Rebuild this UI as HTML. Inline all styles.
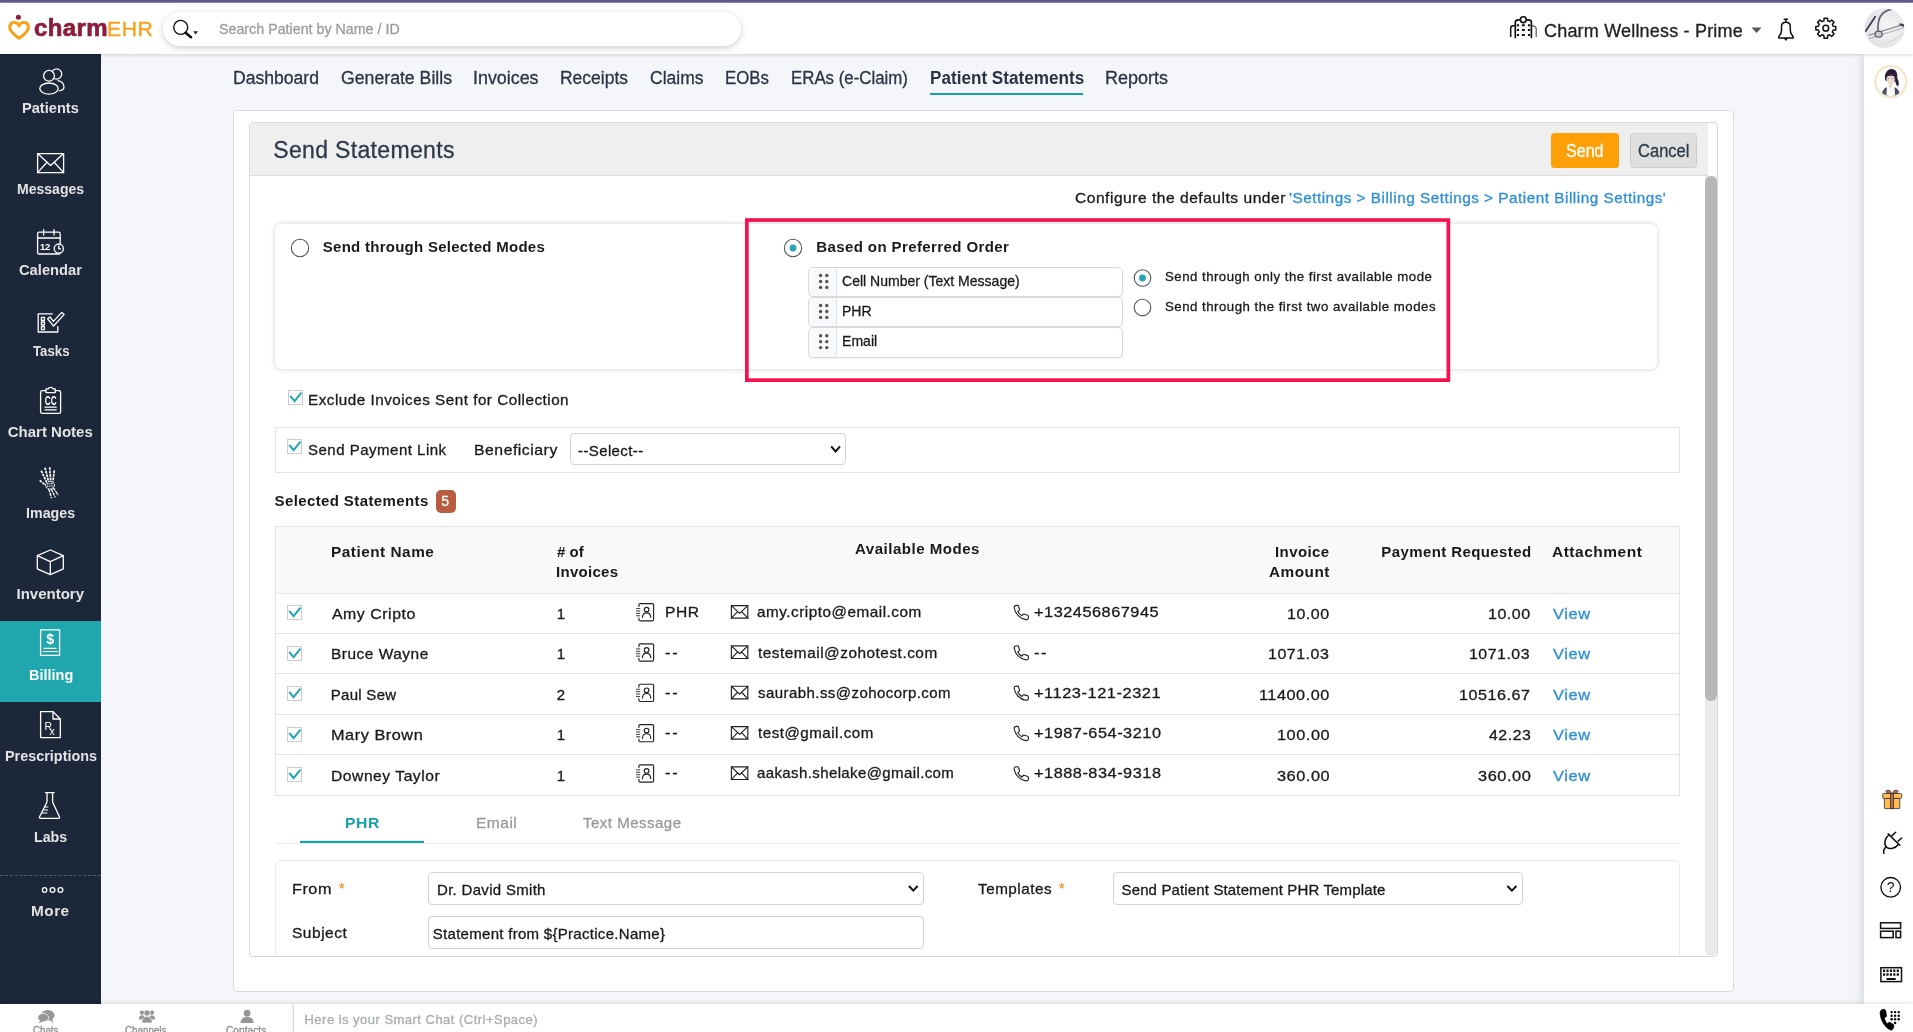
<!DOCTYPE html>
<html lang="en"><head><meta charset="utf-8"><title>Send Statements - charmEHR</title>
<style>
html,body{margin:0;padding:0;}
body{width:1913px;height:1032px;overflow:hidden;background:#f5f6fa;font-family:"Liberation Sans",sans-serif;color:#222;}
#app{will-change:transform;position:relative;width:1913px;height:1032px;overflow:hidden;background:#f5f6fa;}
#app *{box-sizing:border-box;}
.a{position:absolute;}
.t{position:absolute;white-space:nowrap;line-height:1;transform-origin:0 0;-webkit-text-stroke-width:0.3px;}
svg.ic{position:absolute;left:0;top:0;overflow:visible;pointer-events:none;}
svg text{font-family:"Liberation Sans",sans-serif;}
.topline{left:0;top:0;width:1913px;height:3px;background:linear-gradient(#5b5a8c 0,#5b5a8c 2px,#b4b4cc 3px);}
.header{left:0;top:3px;width:1913px;height:51px;background:#fff;box-shadow:0 1px 3px rgba(0,0,0,.16);}
.search{left:163px;top:12px;width:578px;height:34px;border-radius:17px;background:#fff;box-shadow:0 2px 6px rgba(60,64,80,.26);}
.sidebar{left:0;top:54px;width:101px;height:949.5px;background:#1d273a;}
.sb-active{left:0;top:620.5px;width:101px;height:81.5px;background:#1fa7ad;}
.sb-div{left:0;top:875px;width:101px;height:0;border-top:1px dashed #525c78;}
.rightbar{left:1864px;top:54px;width:49px;height:978px;background:#fff;box-shadow:-2px 0 9px rgba(0,0,0,.13);}
.bottombar{left:0;top:1003.5px;width:1913px;height:29px;background:#fff;box-shadow:0 -1px 4px rgba(0,0,0,.12);}
.bb-div{left:293px;top:1003.5px;width:1px;height:29px;background:#d9d9d9;box-shadow:-1px 0 3px rgba(0,0,0,.12);}
.card{left:233px;top:110px;width:1500.5px;height:881.5px;background:#fff;border:1px solid #dcdcdc;border-radius:4px;}
.panel{left:249px;top:122px;width:1468.5px;height:834.5px;background:#fff;border:1px solid #d9d9d9;border-radius:4px;overflow:hidden;}
.phead{left:250px;top:123px;width:1458px;height:52.5px;background:#efefef;border-bottom:1px solid #dcdcdc;}
.btn-send{left:1551px;top:133px;width:68px;height:35px;border-radius:3.5px;background:#fd9f06;}
.btn-cancel{left:1630px;top:133px;width:67px;height:34.5px;border-radius:3.5px;background:#dfdfdf;border:1px solid #cecece;}
.sc-track{left:1705px;top:176px;width:12px;height:780px;background:#ebebec;border-radius:0 0 6px 6px;}
.sc-thumb{left:1705px;top:176px;width:12px;height:525px;border-radius:6px;background:#b7b7b7;}
.opt{left:275px;top:223.5px;width:1382px;height:145.5px;border-radius:6px;background:#fff;box-shadow:0 0 5px rgba(0,0,0,.2);}
.hl{left:745px;top:218px;width:705.5px;height:164px;border:4px solid #f5114f;}
.drag{left:808px;width:314.5px;height:30px;border:1px solid #d6dade;border-radius:5px;background:#fff;overflow:hidden;box-shadow:0 1px 1px rgba(0,0,0,.05);}
.drag i{position:absolute;left:0;top:0;width:27.5px;height:31px;background:#f8f9fa;border-right:1px solid #e1e4e8;}
.cb{width:15px;height:15px;background:#fff;border:1px solid #c9cdd2;}
.paybox{left:275px;top:427px;width:1404.5px;height:46px;border:1px solid #e2e5ea;background:#fff;}
.sel{border:1px solid #d4d4d4;border-radius:4px;background:#fff;}
.badge{left:436px;top:490px;width:20px;height:23px;border-radius:5px;background:#b85c42;}
.tbl{left:275px;top:526px;width:1404.5px;height:269.5px;border:1px solid #e1e4e9;background:#fff;}
.thead{left:276px;top:527px;width:1402.5px;height:66px;background:#f8f9fb;}
.hline{left:276px;width:1402.5px;height:1px;background:#e1e4e9;}
.tab-ul{left:300px;top:841px;width:124px;height:2px;background:#15a0a6;box-shadow:0 -0.5px 0 rgba(21,160,166,.35);}
.tab-line{left:275px;top:843px;width:1404.5px;height:1px;background:#ebebeb;}
.form{left:275px;top:861px;width:1405px;height:130px;border:1px solid #e9e9e9;border-radius:6px;background:#fff;}

</style></head>
<body>
<div id="app">
<div class="a topline"></div>
<div class="a sidebar"></div><div class="a sb-active"></div><div class="a sb-div"></div>
<div class="a" style="left:930px;top:93px;width:153px;height:2px;background:#16a1a7"></div>
<div class="a card"></div>
<div class="a panel"></div>
<div class="a phead"></div>
<div class="a btn-send"></div><div class="a btn-cancel"></div>
<div class="a sc-track"></div><div class="a sc-thumb"></div>
<div class="a opt"></div>
<div class="a drag" style="top:267px;height:30px"><i></i></div>
<div class="a drag" style="top:297px;height:30px"><i></i></div>
<div class="a drag" style="top:327px;height:30.5px"><i></i></div>
<svg class="ic" width="1913" height="1032"><rect x="746.85" y="220.05" width="701.5" height="160.1" fill="none" stroke="#f5114f" stroke-width="3.7"/></svg>
<div class="a cb" style="left:288px;top:390px"></div>
<div class="a paybox"></div>
<div class="a cb" style="left:287px;top:439px"></div>
<div class="a sel" style="left:570px;top:433px;width:275.5px;height:32px"></div>
<div class="a badge"></div>
<div class="a tbl"></div><div class="a thead"></div>
<div class="a hline" style="top:593px"></div>
<div class="a cb" style="left:287px;top:605px"></div>
<div class="a hline" style="top:633px"></div>
<div class="a cb" style="left:287px;top:646px"></div>
<div class="a hline" style="top:673.4px"></div>
<div class="a cb" style="left:287px;top:686px"></div>
<div class="a hline" style="top:714px"></div>
<div class="a cb" style="left:287px;top:727px"></div>
<div class="a hline" style="top:754.3px"></div>
<div class="a cb" style="left:287px;top:767px"></div>
<div class="a tab-line"></div><div class="a tab-ul"></div>
<div class="a" style="left:250px;top:850px;width:1455px;height:106px;overflow:hidden"><div class="a form" style="left:25px;top:10px"></div></div>
<div class="a sel" style="left:428px;top:872px;width:495.5px;height:32.5px"></div>
<div class="a sel" style="left:1113px;top:872px;width:409.5px;height:32.5px"></div>
<div class="a sel" style="left:428px;top:916px;width:495.5px;height:32.5px"></div>
<div class="a rightbar"></div>
<div class="a bottombar"></div><div class="a bb-div"></div>
<div class="a header"></div>
<div class="a search"></div>
<svg class="ic" width="1913" height="1032" viewBox="0 0 1913 1032">
<circle cx="18.4" cy="17.3" r="2.5" fill="#8c1c3b"/>
<path d="M19 26 C17.6 21.3 9.7 21 9.7 27.6 C9.7 32.2 15 35 19 38.4 C23 35 28.4 32.2 28.4 27.6 C28.4 21 20.4 21.3 19 26 Z" fill="none" stroke="#f9a01b" stroke-width="3" stroke-linejoin="round"/>
<circle cx="180.7" cy="27.4" r="7" fill="none" stroke="#111" stroke-width="1.4"/>
<path d="M185.6 32.8 L191 37.2" stroke="#111" stroke-width="2.6" stroke-linecap="round"/>
<path d="M193.2 31.2 L198 31.2 L195.6 34.6 Z" fill="#222"/>
<g fill="none" stroke="#111" stroke-width="1.7" stroke-linecap="round" stroke-linejoin="round"><path d="M1515.3 37.4 V22.6 Q1515.3 19.9 1518 19.9 H1528.7 Q1531.4 19.9 1531.4 22.6 V37.4"/><path d="M1515.3 25.8 H1513.2 Q1510.7 25.8 1510.7 28.3 V36.4" stroke-width="1.5"/><path d="M1531.4 25.8 H1533.4 Q1536.2 26.6 1536.2 28.8 V36.4" stroke-width="1.3" stroke-opacity="0.65"/><circle cx="1523.3" cy="19.7" r="2.9" fill="#fff" stroke-width="1.6"/></g>
<rect x="1516.9" y="24.2" width="2.2" height="2.1" rx="0.3" fill="#111"/><rect x="1521.9" y="24.2" width="2.9" height="2.1" rx="0.3" fill="#111"/><rect x="1527.9" y="24.2" width="2.2" height="2.1" rx="0.3" fill="#111"/>
<rect x="1516.9" y="28.9" width="2.2" height="2.1" rx="0.3" fill="#111"/><rect x="1521.9" y="28.9" width="2.9" height="2.1" rx="0.3" fill="#111"/><rect x="1527.9" y="28.9" width="2.2" height="2.1" rx="0.3" fill="#111"/>
<rect x="1516.9" y="33.9" width="2.2" height="2.1" rx="0.3" fill="#111"/><rect x="1521.9" y="33.9" width="2.9" height="2.1" rx="0.3" fill="#111"/><rect x="1527.9" y="33.9" width="2.2" height="2.1" rx="0.3" fill="#111"/>
<path d="M1751.5 27.6 L1761.5 27.6 L1756.5 33 Z" fill="#555"/>
<g fill="none" stroke="#111" stroke-width="1.5" stroke-linejoin="round" stroke-linecap="round"><path d="M1784.3 19.3 H1787.5 M1785.9 19.5 V21.8"/><path d="M1778.8 38.1 V36.5 C1780.8 34.4 1781.5 32.4 1781.5 30.4 V26.6 C1781.5 23.7 1783.2 22.3 1785.9 22.3 C1788.6 22.3 1790.3 23.7 1790.3 26.6 V30.4 C1790.3 32.4 1791 34.4 1793.1 36.5 V38.1 Z"/><path d="M1784.4 38.6 L1785.9 40.4 L1787.4 38.6 Z" fill="#111" stroke-width="1"/></g>
<path d="M1833.16 26.32 L1835.75 26.49 L1835.75 29.91 L1833.16 30.08 L1832.34 32.08 L1834.05 34.03 L1831.63 36.45 L1829.68 34.74 L1827.68 35.56 L1827.51 38.15 L1824.09 38.15 L1823.92 35.56 L1821.92 34.74 L1819.97 36.45 L1817.55 34.03 L1819.26 32.08 L1818.44 30.08 L1815.85 29.91 L1815.85 26.49 L1818.44 26.32 L1819.26 24.32 L1817.55 22.37 L1819.97 19.95 L1821.92 21.66 L1823.92 20.84 L1824.09 18.25 L1827.51 18.25 L1827.68 20.84 L1829.68 21.66 L1831.63 19.95 L1834.05 22.37 L1832.34 24.32 Z" fill="none" stroke="#111" stroke-width="1.5" stroke-linejoin="round"/>
<circle cx="1825.8" cy="28.2" r="2.9" fill="none" stroke="#111" stroke-width="1.5"/>
<defs><clipPath id="av1"><circle cx="1884.5" cy="28.2" r="19.9"/></clipPath><radialGradient id="avg" cx="0.6" cy="0.45" r="0.75"><stop offset="0" stop-color="#f6f6f7"/><stop offset="1" stop-color="#dedee2"/></radialGradient></defs>
<circle cx="1884.5" cy="28.2" r="19.9" fill="url(#avg)"/>
<g clip-path="url(#av1)" fill="none" stroke-linecap="round"><path d="M1869 38.6 L1904 27.6" stroke="#b9bac0" stroke-width="1.2"/><path d="M1869.4 35.2 L1903.6 24.4" stroke="#8d8e96" stroke-width="1.4"/><path d="M1878.4 33 C1876.6 20 1880.4 11.2 1892 9.2" stroke="#65666e" stroke-width="1.7"/><path d="M1865.8 31 L1875.2 16.8" stroke="#3b3e57" stroke-width="1.8"/><ellipse cx="1878.6" cy="34.2" rx="3.6" ry="3" fill="#c9cad0" stroke="#5a5b63" stroke-width="1.2"/><path d="M1900.4 24.4 L1903.6 25.6" stroke="#4a4b5a" stroke-width="2.2"/><path d="M1886 44 L1904 34" stroke="#d0d0d6" stroke-width="1"/></g>
<defs><clipPath id="av2"><circle cx="1890.8" cy="81.5" r="14.4"/></clipPath></defs>
<circle cx="1890.8" cy="81.9" r="17" fill="#000" opacity="0.05"/><circle cx="1890.8" cy="81.5" r="15.4" fill="#fff" stroke="#f6e6c6" stroke-width="2"/>
<g clip-path="url(#av2)"><path d="M1885 79.5 C1884 71.5 1889 68.6 1892 69 C1896.6 69.6 1897.8 73.6 1897.2 78 C1898.6 80.6 1899.6 84 1898 86.6 C1896.6 85.8 1895.6 84 1895.4 81.6 L1886 81 Z" fill="#2b1d3d"/><ellipse cx="1890.6" cy="79.2" rx="4.2" ry="5.2" fill="#f0dccb"/><path d="M1886.2 77 C1887.4 73.4 1892.6 72.6 1895 76.4 C1892.6 75.2 1889 75.4 1886.2 77 Z" fill="#2b1d3d"/><path d="M1887.4 78.6 H1889.4 M1891.6 78.6 H1893.6" stroke="#7d8fa8" stroke-width="0.9"/><path d="M1881.6 97 C1881.6 89.6 1885 87.6 1888 87 L1893.4 87 C1896.4 87.6 1900 89.6 1900 97 Z" fill="#4a5068"/><path d="M1887 86.6 L1886.2 97 L1895.2 97 L1894.4 86.6 L1890.7 84.4 Z" fill="#fff"/><path d="M1889.2 83.6 H1892.2 V86.6 L1890.7 88 L1889.2 86.6 Z" fill="#ecd5c2"/></g>
<g fill="none" stroke="#fff" stroke-width="1.3" stroke-linecap="round" stroke-linejoin="round"><circle cx="56.6" cy="74" r="5.1"/><path d="M58 80.6 C61.6 81.4 64 84 64 87 C64 89.2 62 90.4 59.4 90.8"/><circle cx="49" cy="75.8" r="5.4" fill="#1d273a"/><ellipse cx="49" cy="88.6" rx="9.2" ry="5.6" fill="#1d273a"/></g>
<g fill="none" stroke="#fff" stroke-width="1.3" stroke-linecap="round" stroke-linejoin="round"><rect x="37.6" y="153.6" width="26" height="19"/><path d="M37.6 153.6 L50.6 165.4 L63.6 153.6"/><path d="M37.6 172.6 L47 162.2 M63.6 172.6 L54.2 162.2"/></g>
<g fill="none" stroke="#fff" stroke-width="1.3" stroke-linecap="round" stroke-linejoin="round"><rect x="37.6" y="232.2" width="22.6" height="21.8" rx="1.6"/><path d="M43.6 229.6 V235 M54 229.6 V235 M37.6 238 H60.2"/><circle cx="58.8" cy="248.6" r="4.6" fill="#1d273a"/><path d="M58.8 246 V248.8 H60.6"/></g>
<text x="40" y="250" font-size="9.5" font-weight="700" fill="#fff" letter-spacing="-0.3">12</text>
<g fill="none" stroke="#fff" stroke-width="1.3" stroke-linecap="round" stroke-linejoin="round"><path d="M57.8 326.6 V332 H38.2 V313.8 H52.4"/><rect x="41.4" y="317.4" width="3" height="3"/><rect x="41.4" y="322" width="3" height="3"/><rect x="41.4" y="326.6" width="3" height="3"/><path d="M47.6 318.8 L50 317 L53.4 321.4 L61.8 312.4 L64.2 314.4 L53.6 326 Z"/></g>
<g fill="none" stroke="#fff" stroke-width="1.3" stroke-linecap="round" stroke-linejoin="round"><rect x="40.6" y="390.6" width="20" height="22.8" rx="1.6"/><path d="M46 392.6 V388.8 H48.4 C48.6 386.8 52.6 386.8 52.8 388.8 H55.2 V392.6 Z" fill="#1d273a"/><path d="M45 407.2 H56.2 M45 409.8 H56.2"/></g>
<text transform="translate(50.7 404.6) scale(0.68 1)" font-size="12" font-weight="700" fill="#fff" text-anchor="middle">CC</text>
<g fill="none" stroke="#fff" stroke-width="1.7" stroke-dasharray="2.7 0.8"><path d="M41.2 470.6 L46.6 482"/><path d="M45 467.6 L48.5 481.4"/><path d="M49.7 467.2 L50.7 481.2"/><path d="M54.3 470.4 L52.9 481.6"/><path d="M39.7 480.4 L45.6 485.2"/></g>
<g fill="none" stroke="#fff" stroke-width="1.1"><ellipse cx="50" cy="485.2" rx="4.4" ry="3.8" stroke-dasharray="1.6 0.8"/><path d="M47 484 L53 483.4 M47 486.4 L53.4 485.8" stroke-dasharray="1.4 0.7"/><path d="M48.8 489 L51.6 498.4 M51.2 488.8 L55.2 497.4 M53.4 487.8 L58.2 495.2" stroke-width="1.3" stroke-dasharray="3.4 0.7"/></g>
<g fill="none" stroke="#fff" stroke-width="1.3" stroke-linecap="round" stroke-linejoin="round"><path d="M50.3 550 L63.3 555.6 V568.8 L50.3 574.6 L37.3 568.8 V555.6 Z"/><path d="M37.3 555.6 L50.3 561.6 L63.3 555.6 M50.3 561.6 V574.6"/></g>
<g fill="none" stroke="#fff" stroke-width="1.3" stroke-linecap="round" stroke-linejoin="round"><rect x="40.6" y="629.8" width="19" height="25.6"/><path d="M44 648.4 H56 M43.2 651.5 H57.6" stroke-width="1.1"/></g>
<text x="50.2" y="643.8" font-size="14" font-weight="700" fill="#fff" text-anchor="middle">$</text>
<g fill="none" stroke="#fff" stroke-width="1.3" stroke-linecap="round" stroke-linejoin="round"><path d="M40.6 711.6 H53 L60.3 719 V737.6 H40.6 Z"/><path d="M53 711.6 V719 H60.3"/></g>
<text x="44.4" y="730" font-size="10.5" fill="#fff">R</text><text x="49.4" y="734.8" font-size="10.5" fill="#fff">x</text>
<g fill="none" stroke="#fff" stroke-width="1.3" stroke-linecap="round" stroke-linejoin="round"><path d="M45.4 792.6 H54.2"/><path d="M47 792.6 V802 L39.6 816.8 C39.2 817.8 39.6 818.4 40.6 818.4 H58.4 C59.4 818.4 59.8 817.8 59.4 816.8 L52.6 802 V792.6"/><path d="M44.8 807 H48 M43.6 810 H47.6 M42.2 813 H47"  stroke-width="1"/></g>
<g fill="none" stroke="#fff" stroke-width="1.3" stroke-linecap="round" stroke-linejoin="round" stroke-width="1.1"><ellipse cx="44.6" cy="890" rx="2.2" ry="2.4"/><ellipse cx="52.5" cy="890" rx="2.4" ry="2.4"/><ellipse cx="60.4" cy="890" rx="2.4" ry="2.4"/></g>
<circle cx="300" cy="248" r="8.7" fill="#fff" stroke="#555" stroke-width="1.1"/>
<circle cx="793" cy="248" r="8.7" fill="#fff" stroke="#555" stroke-width="1.1"/>
<circle cx="793" cy="248" r="3.4" fill="#25a4b3"/>
<circle cx="1142.5" cy="278" r="8.3" fill="#fff" stroke="#555" stroke-width="1.1"/>
<circle cx="1142.5" cy="278" r="3.4" fill="#25a4b3"/>
<circle cx="1142.5" cy="307.6" r="8.3" fill="#fff" stroke="#555" stroke-width="1.1"/>
<circle cx="820.6" cy="275.50" r="1.7" fill="#555"/>
<circle cx="826.8" cy="275.50" r="1.7" fill="#555"/>
<circle cx="820.6" cy="281.45" r="1.7" fill="#555"/>
<circle cx="826.8" cy="281.45" r="1.7" fill="#555"/>
<circle cx="820.6" cy="287.40" r="1.7" fill="#555"/>
<circle cx="826.8" cy="287.40" r="1.7" fill="#555"/>
<circle cx="820.6" cy="305.50" r="1.7" fill="#555"/>
<circle cx="826.8" cy="305.50" r="1.7" fill="#555"/>
<circle cx="820.6" cy="311.45" r="1.7" fill="#555"/>
<circle cx="826.8" cy="311.45" r="1.7" fill="#555"/>
<circle cx="820.6" cy="317.40" r="1.7" fill="#555"/>
<circle cx="826.8" cy="317.40" r="1.7" fill="#555"/>
<circle cx="820.6" cy="335.70" r="1.7" fill="#555"/>
<circle cx="826.8" cy="335.70" r="1.7" fill="#555"/>
<circle cx="820.6" cy="341.65" r="1.7" fill="#555"/>
<circle cx="826.8" cy="341.65" r="1.7" fill="#555"/>
<circle cx="820.6" cy="347.60" r="1.7" fill="#555"/>
<circle cx="826.8" cy="347.60" r="1.7" fill="#555"/>
<path d="M290.20 395.80 L294.60 401.20 L301.40 392.60" fill="none" stroke="#1ea5b8" stroke-width="1.9"/>
<path d="M289.20 444.80 L293.60 450.20 L300.40 441.60" fill="none" stroke="#1ea5b8" stroke-width="1.9"/>
<path d="M289.20 610.80 L293.60 616.20 L300.40 607.60" fill="none" stroke="#1ea5b8" stroke-width="1.9"/>
<path d="M289.20 651.80 L293.60 657.20 L300.40 648.60" fill="none" stroke="#1ea5b8" stroke-width="1.9"/>
<path d="M289.20 691.80 L293.60 697.20 L300.40 688.60" fill="none" stroke="#1ea5b8" stroke-width="1.9"/>
<path d="M289.20 732.80 L293.60 738.20 L300.40 729.60" fill="none" stroke="#1ea5b8" stroke-width="1.9"/>
<path d="M289.20 772.80 L293.60 778.20 L300.40 769.60" fill="none" stroke="#1ea5b8" stroke-width="1.9"/>
<path d="M831.2 446.4 L835.6 451.4 L840 446.4" fill="none" stroke="#111" stroke-width="2" />
<path d="M909 886 L913.3 890.6 L917.6 886" fill="none" stroke="#111" stroke-width="2" />
<path d="M1507.4 886 L1511.9 890.6 L1516.4 886" fill="none" stroke="#111" stroke-width="2" />
<g transform="translate(0 0.00)">
<g fill="none" stroke="#222" stroke-width="1.15" stroke-linecap="round" stroke-linejoin="round"><path d="M638.9 606.4 V604.8 Q638.9 603.6 640.1 603.6 H652.4 Q653.6 603.6 653.6 604.8 V619.6 Q653.6 620.8 652.4 620.8 H640.1 Q638.9 620.8 638.9 619.6 V618"/><path d="M636.5 608.6 H639.8 M636.5 611 H639.8 M636.5 613.4 H639.8 M636.5 615.8 H639.8" stroke-width="0.9"/><circle cx="646.6" cy="609.6" r="2.3"/><path d="M642.4 617.4 C642.6 614 644.4 612.8 646.6 612.8 C648.8 612.8 650.6 614 650.8 617.4"/></g>
<g fill="none" stroke="#222" stroke-width="1.15" stroke-linecap="round" stroke-linejoin="round"><rect x="731.4" y="605.6" width="16.4" height="12.6"/><path d="M731.4 605.6 L739.6 613.4 L747.8 605.6 M731.4 618.2 L737.6 611.6 M747.8 618.2 L741.6 611.6"/></g>
<g fill="none" stroke="#222" stroke-width="1.15" stroke-linecap="round" stroke-linejoin="round" stroke-width="1"><path d="M1016.4 605.4 C1015 605.4 1014 606.2 1014.2 607.8 C1015 613.6 1020 618.8 1026 619.6 C1027.6 619.8 1028.4 618.8 1028.4 617.4 V616.4 C1028.4 615.6 1028 615.2 1027.2 615 L1024.4 614.2 C1023.6 614 1023 614.2 1022.6 614.8 L1022 615.8 C1020 614.8 1018.6 613.2 1017.8 611.4 L1018.8 610.8 C1019.4 610.4 1019.6 609.8 1019.4 609 L1018.6 606.4 C1018.4 605.6 1017.8 605.4 1017.2 605.4 Z"/></g>
</g>
<g transform="translate(0 40.33)">
<g fill="none" stroke="#222" stroke-width="1.15" stroke-linecap="round" stroke-linejoin="round"><path d="M638.9 606.4 V604.8 Q638.9 603.6 640.1 603.6 H652.4 Q653.6 603.6 653.6 604.8 V619.6 Q653.6 620.8 652.4 620.8 H640.1 Q638.9 620.8 638.9 619.6 V618"/><path d="M636.5 608.6 H639.8 M636.5 611 H639.8 M636.5 613.4 H639.8 M636.5 615.8 H639.8" stroke-width="0.9"/><circle cx="646.6" cy="609.6" r="2.3"/><path d="M642.4 617.4 C642.6 614 644.4 612.8 646.6 612.8 C648.8 612.8 650.6 614 650.8 617.4"/></g>
<g fill="none" stroke="#222" stroke-width="1.15" stroke-linecap="round" stroke-linejoin="round"><rect x="731.4" y="605.6" width="16.4" height="12.6"/><path d="M731.4 605.6 L739.6 613.4 L747.8 605.6 M731.4 618.2 L737.6 611.6 M747.8 618.2 L741.6 611.6"/></g>
<g fill="none" stroke="#222" stroke-width="1.15" stroke-linecap="round" stroke-linejoin="round" stroke-width="1"><path d="M1016.4 605.4 C1015 605.4 1014 606.2 1014.2 607.8 C1015 613.6 1020 618.8 1026 619.6 C1027.6 619.8 1028.4 618.8 1028.4 617.4 V616.4 C1028.4 615.6 1028 615.2 1027.2 615 L1024.4 614.2 C1023.6 614 1023 614.2 1022.6 614.8 L1022 615.8 C1020 614.8 1018.6 613.2 1017.8 611.4 L1018.8 610.8 C1019.4 610.4 1019.6 609.8 1019.4 609 L1018.6 606.4 C1018.4 605.6 1017.8 605.4 1017.2 605.4 Z"/></g>
</g>
<g transform="translate(0 80.66)">
<g fill="none" stroke="#222" stroke-width="1.15" stroke-linecap="round" stroke-linejoin="round"><path d="M638.9 606.4 V604.8 Q638.9 603.6 640.1 603.6 H652.4 Q653.6 603.6 653.6 604.8 V619.6 Q653.6 620.8 652.4 620.8 H640.1 Q638.9 620.8 638.9 619.6 V618"/><path d="M636.5 608.6 H639.8 M636.5 611 H639.8 M636.5 613.4 H639.8 M636.5 615.8 H639.8" stroke-width="0.9"/><circle cx="646.6" cy="609.6" r="2.3"/><path d="M642.4 617.4 C642.6 614 644.4 612.8 646.6 612.8 C648.8 612.8 650.6 614 650.8 617.4"/></g>
<g fill="none" stroke="#222" stroke-width="1.15" stroke-linecap="round" stroke-linejoin="round"><rect x="731.4" y="605.6" width="16.4" height="12.6"/><path d="M731.4 605.6 L739.6 613.4 L747.8 605.6 M731.4 618.2 L737.6 611.6 M747.8 618.2 L741.6 611.6"/></g>
<g fill="none" stroke="#222" stroke-width="1.15" stroke-linecap="round" stroke-linejoin="round" stroke-width="1"><path d="M1016.4 605.4 C1015 605.4 1014 606.2 1014.2 607.8 C1015 613.6 1020 618.8 1026 619.6 C1027.6 619.8 1028.4 618.8 1028.4 617.4 V616.4 C1028.4 615.6 1028 615.2 1027.2 615 L1024.4 614.2 C1023.6 614 1023 614.2 1022.6 614.8 L1022 615.8 C1020 614.8 1018.6 613.2 1017.8 611.4 L1018.8 610.8 C1019.4 610.4 1019.6 609.8 1019.4 609 L1018.6 606.4 C1018.4 605.6 1017.8 605.4 1017.2 605.4 Z"/></g>
</g>
<g transform="translate(0 120.99)">
<g fill="none" stroke="#222" stroke-width="1.15" stroke-linecap="round" stroke-linejoin="round"><path d="M638.9 606.4 V604.8 Q638.9 603.6 640.1 603.6 H652.4 Q653.6 603.6 653.6 604.8 V619.6 Q653.6 620.8 652.4 620.8 H640.1 Q638.9 620.8 638.9 619.6 V618"/><path d="M636.5 608.6 H639.8 M636.5 611 H639.8 M636.5 613.4 H639.8 M636.5 615.8 H639.8" stroke-width="0.9"/><circle cx="646.6" cy="609.6" r="2.3"/><path d="M642.4 617.4 C642.6 614 644.4 612.8 646.6 612.8 C648.8 612.8 650.6 614 650.8 617.4"/></g>
<g fill="none" stroke="#222" stroke-width="1.15" stroke-linecap="round" stroke-linejoin="round"><rect x="731.4" y="605.6" width="16.4" height="12.6"/><path d="M731.4 605.6 L739.6 613.4 L747.8 605.6 M731.4 618.2 L737.6 611.6 M747.8 618.2 L741.6 611.6"/></g>
<g fill="none" stroke="#222" stroke-width="1.15" stroke-linecap="round" stroke-linejoin="round" stroke-width="1"><path d="M1016.4 605.4 C1015 605.4 1014 606.2 1014.2 607.8 C1015 613.6 1020 618.8 1026 619.6 C1027.6 619.8 1028.4 618.8 1028.4 617.4 V616.4 C1028.4 615.6 1028 615.2 1027.2 615 L1024.4 614.2 C1023.6 614 1023 614.2 1022.6 614.8 L1022 615.8 C1020 614.8 1018.6 613.2 1017.8 611.4 L1018.8 610.8 C1019.4 610.4 1019.6 609.8 1019.4 609 L1018.6 606.4 C1018.4 605.6 1017.8 605.4 1017.2 605.4 Z"/></g>
</g>
<g transform="translate(0 161.32)">
<g fill="none" stroke="#222" stroke-width="1.15" stroke-linecap="round" stroke-linejoin="round"><path d="M638.9 606.4 V604.8 Q638.9 603.6 640.1 603.6 H652.4 Q653.6 603.6 653.6 604.8 V619.6 Q653.6 620.8 652.4 620.8 H640.1 Q638.9 620.8 638.9 619.6 V618"/><path d="M636.5 608.6 H639.8 M636.5 611 H639.8 M636.5 613.4 H639.8 M636.5 615.8 H639.8" stroke-width="0.9"/><circle cx="646.6" cy="609.6" r="2.3"/><path d="M642.4 617.4 C642.6 614 644.4 612.8 646.6 612.8 C648.8 612.8 650.6 614 650.8 617.4"/></g>
<g fill="none" stroke="#222" stroke-width="1.15" stroke-linecap="round" stroke-linejoin="round"><rect x="731.4" y="605.6" width="16.4" height="12.6"/><path d="M731.4 605.6 L739.6 613.4 L747.8 605.6 M731.4 618.2 L737.6 611.6 M747.8 618.2 L741.6 611.6"/></g>
<g fill="none" stroke="#222" stroke-width="1.15" stroke-linecap="round" stroke-linejoin="round" stroke-width="1"><path d="M1016.4 605.4 C1015 605.4 1014 606.2 1014.2 607.8 C1015 613.6 1020 618.8 1026 619.6 C1027.6 619.8 1028.4 618.8 1028.4 617.4 V616.4 C1028.4 615.6 1028 615.2 1027.2 615 L1024.4 614.2 C1023.6 614 1023 614.2 1022.6 614.8 L1022 615.8 C1020 614.8 1018.6 613.2 1017.8 611.4 L1018.8 610.8 C1019.4 610.4 1019.6 609.8 1019.4 609 L1018.6 606.4 C1018.4 605.6 1017.8 605.4 1017.2 605.4 Z"/></g>
</g>
<g stroke="#2b2b36" stroke-width="0.8" stroke-linejoin="round"><rect x="1884.4" y="798.4" width="15.4" height="10.2" rx="0.8" fill="#fbbd50"/><rect x="1882.7" y="793.5" width="19" height="4.9" rx="1" fill="#fcc059"/><rect x="1890.6" y="793.5" width="2.9" height="15.1" fill="#c8693f"/><path d="M1891.6 793.4 L1889.6 790.4 L1886.6 790.4 L1885.9 791.6 L1887.6 793.4 Z" fill="#c8693f"/><path d="M1892.4 793.4 L1894.4 790.4 L1897.4 790.4 L1898.1 791.6 L1896.4 793.4 Z" fill="#c8693f"/></g>
<g fill="none" stroke="#111" stroke-width="1.5" stroke-linecap="round" stroke-linejoin="round"><path d="M1888.2 833.9 L1899.8 845.3"/><path d="M1888.9 834.8 C1884.6 838.6 1883.6 844.6 1886.6 847.2 C1889.6 849.8 1895.4 848.4 1898.6 844.2"/><path d="M1892 835.6 L1895.7 832.3 M1898.1 841.1 L1901.8 838"/><path d="M1886.2 846.8 C1884 848.4 1883 850 1883.9 853.4"/></g>
<circle cx="1890.7" cy="887.3" r="9.8" fill="none" stroke="#111" stroke-width="1.4"/><text x="1890.7" y="892.4" font-size="14" fill="#111" text-anchor="middle">?</text>
<g fill="none" stroke="#111" stroke-width="1.5"><rect x="1880.6" y="922.8" width="20" height="5.6"/><rect x="1880.6" y="931.2" width="12.6" height="6.4"/><rect x="1896" y="931.2" width="4.6" height="6.4"/></g>
<g><rect x="1880.9" y="967.7" width="20.6" height="13.9" fill="none" stroke="#111" stroke-width="1.5"/>
<rect x="1883" y="969.4" width="2.2" height="2.5" rx="0.4" fill="#111"/>
<rect x="1886.4" y="969.4" width="2.2" height="2.5" rx="0.4" fill="#111"/>
<rect x="1889.8" y="969.4" width="2.2" height="2.5" rx="0.4" fill="#111"/>
<rect x="1893.2" y="969.4" width="2.2" height="2.5" rx="0.4" fill="#111"/>
<rect x="1896.7" y="969.4" width="2.2" height="2.5" rx="0.4" fill="#111"/>
<rect x="1883" y="973.3" width="2.2" height="2.5" rx="0.4" fill="#111"/>
<rect x="1886.4" y="973.3" width="2.2" height="2.5" rx="0.4" fill="#111"/>
<rect x="1889.8" y="973.3" width="2.2" height="2.5" rx="0.4" fill="#111"/>
<rect x="1893.2" y="973.3" width="2.2" height="2.5" rx="0.4" fill="#111"/>
<rect x="1896.7" y="973.3" width="2.2" height="2.5" rx="0.4" fill="#111"/>
<rect x="1886.3" y="978" width="9.6" height="1.9" rx="0.9" fill="#111"/></g>
<path d="M1883.2 1009.4 C1881 1009.6 1880 1011 1880.2 1013.6 C1880.8 1020.4 1884.6 1026.6 1889.6 1029.6 C1891.4 1030.6 1892.8 1029.6 1893.2 1028.2 L1893.8 1026 C1894 1025.2 1893.6 1024.6 1893 1024.2 L1890 1022.6 C1889.4 1022.2 1888.8 1022.4 1888.4 1022.8 L1887.4 1024 C1885.6 1022.2 1884.6 1019.6 1884.2 1017.4 L1885.6 1017 C1886.2 1016.8 1886.6 1016.2 1886.4 1015.6 L1885.6 1010.6 C1885.4 1009.8 1884.8 1009.4 1884.2 1009.4 Z" fill="#000" stroke="#000" stroke-width="0.8" stroke-linejoin="round"/>
<circle cx="1891.6" cy="1012.1" r="1.2" fill="#000"/>
<circle cx="1895.1" cy="1012.1" r="1.2" fill="#000"/>
<circle cx="1898.7" cy="1012.1" r="1.2" fill="#000"/>
<circle cx="1891.6" cy="1015.7" r="1.2" fill="#000"/>
<circle cx="1895.1" cy="1015.7" r="1.2" fill="#000"/>
<circle cx="1898.7" cy="1015.7" r="1.2" fill="#000"/>
<circle cx="1891.6" cy="1019.3" r="1.2" fill="#000"/>
<circle cx="1895.1" cy="1019.3" r="1.2" fill="#000"/>
<circle cx="1898.7" cy="1019.3" r="1.2" fill="#000"/>
<circle cx="1895.1" cy="1023" r="1.2" fill="#000"/>
<g fill="#969696"><ellipse cx="47.8" cy="1015.2" rx="6.8" ry="5.2"/><path d="M49.4 1019.4 L52.8 1023.2 L52.4 1018.6 Z"/><ellipse cx="43.2" cy="1017.6" rx="5.4" ry="4.2" stroke="#fff" stroke-width="0.8"/><path d="M40.4 1020.6 L38.4 1023.2 L43 1021.6 Z"/></g>
<g fill="#969696"><circle cx="142" cy="1012.6" r="2.2"/><circle cx="152" cy="1012.6" r="2.2"/><path d="M138.8 1019.6 C138.8 1016.4 140.4 1015.2 142 1015.2 C143.6 1015.2 144.4 1016 144.4 1017 L144.4 1019.6 Z M155.2 1019.6 C155.2 1016.4 153.6 1015.2 152 1015.2 C150.4 1015.2 149.6 1016 149.6 1017 L149.6 1019.6 Z"/><circle cx="147" cy="1013" r="3" stroke="#fff" stroke-width="0.6"/><path d="M141.8 1023 C141.8 1018.4 144.2 1016.6 147 1016.6 C149.8 1016.6 152.2 1018.4 152.2 1023 Z" stroke="#fff" stroke-width="0.6"/></g>
<g fill="#969696"><circle cx="247.1" cy="1013.2" r="3.4"/><path d="M240.6 1023 C240.6 1018.6 243.6 1017 247.1 1017 C250.6 1017 253.6 1018.6 253.6 1023 Z"/></g>
</svg>
<!-- text layer -->
<span class="t" id="t0" style="left:34.00px;top:16px;font-size:24px;color:#8c1c3b;font-weight:700;-webkit-text-stroke-width:0;letter-spacing:0.400px;-webkit-text-stroke:0.7px #8c1c3b;">charm</span>
<span class="t" id="t1" style="left:106.78px;top:18px;font-size:21px;color:#f9a01b;transform:scaleX(1.0095);letter-spacing:0.500px;-webkit-text-stroke:0.35px #f9a01b;">EHR</span>
<span class="t" id="t2" style="left:219.35px;top:21px;font-size:15px;color:#9b9b9b;transform:scaleX(0.9505);">Search Patient by Name / ID</span>
<span class="t" id="t3" style="left:1544.00px;top:22px;font-size:18px;color:#222;letter-spacing:0.190px;">Charm Wellness - Prime</span>
<span class="t" id="t4" style="left:233.02px;top:69px;font-size:18px;color:#2b3445;transform:scaleX(0.9767);">Dashboard</span>
<span class="t" id="t5" style="left:341.02px;top:69px;font-size:18px;color:#2b3445;transform:scaleX(0.9820);">Generate Bills</span>
<span class="t" id="t6" style="left:473.02px;top:69px;font-size:18px;color:#2b3445;transform:scaleX(0.9921);">Invoices</span>
<span class="t" id="t7" style="left:560.03px;top:69px;font-size:18px;color:#2b3445;transform:scaleX(0.9706);">Receipts</span>
<span class="t" id="t8" style="left:649.53px;top:69px;font-size:18px;color:#2b3445;transform:scaleX(0.9717);">Claims</span>
<span class="t" id="t9" style="left:725.07px;top:69px;font-size:18px;color:#2b3445;transform:scaleX(0.9333);">EOBs</span>
<span class="t" id="t10" style="left:791.07px;top:69px;font-size:18px;color:#2b3445;transform:scaleX(0.9350);">ERAs (e-Claim)</span>
<span class="t" id="t11" style="left:929.55px;top:69px;font-size:18px;color:#2b3445;font-weight:700;-webkit-text-stroke-width:0;transform:scaleX(0.9513);">Patient Statements</span>
<span class="t" id="t12" style="left:1105.00px;top:69px;font-size:18px;color:#2b3445;">Reports</span>
<span class="t" id="t13" style="left:21.53px;top:100px;font-size:15px;color:#e3e3e3;font-weight:700;-webkit-text-stroke-width:0;transform:scaleX(0.9737);">Patients</span>
<span class="t" id="t14" style="left:16.56px;top:181px;font-size:15px;color:#e3e3e3;font-weight:700;-webkit-text-stroke-width:0;transform:scaleX(0.9357);">Messages</span>
<span class="t" id="t15" style="left:18.52px;top:262px;font-size:15px;color:#e3e3e3;font-weight:700;-webkit-text-stroke-width:0;transform:scaleX(0.9802);">Calendar</span>
<span class="t" id="t16" style="left:32.50px;top:343px;font-size:15px;color:#e3e3e3;font-weight:700;-webkit-text-stroke-width:0;transform:scaleX(0.8841);">Tasks</span>
<span class="t" id="t17" style="left:7.75px;top:424px;font-size:15px;color:#e3e3e3;font-weight:700;-webkit-text-stroke-width:0;">Chart Notes</span>
<span class="t" id="t18" style="left:25.80px;top:505px;font-size:15px;color:#e3e3e3;font-weight:700;-webkit-text-stroke-width:0;transform:scaleX(0.9500);">Images</span>
<span class="t" id="t19" style="left:16.50px;top:586px;font-size:15px;color:#e3e3e3;font-weight:700;-webkit-text-stroke-width:0;">Inventory</span>
<span class="t" id="t20" style="left:28.83px;top:667px;font-size:15px;color:#fff;font-weight:700;-webkit-text-stroke-width:0;transform:scaleX(0.9659);">Billing</span>
<span class="t" id="t21" style="left:4.54px;top:748px;font-size:15px;color:#e3e3e3;font-weight:700;-webkit-text-stroke-width:0;transform:scaleX(0.9601);">Prescriptions</span>
<span class="t" id="t22" style="left:34.05px;top:829px;font-size:15px;color:#e3e3e3;font-weight:700;-webkit-text-stroke-width:0;transform:scaleX(0.9470);">Labs</span>
<span class="t" id="t23" style="left:31.48px;top:903px;font-size:15px;color:#e3e3e3;font-weight:700;-webkit-text-stroke-width:0;transform:scaleX(1.0211);letter-spacing:0.500px;">More</span>
<span class="t" id="t24" style="left:273.30px;top:139px;font-size:23px;color:#2c3a4b;letter-spacing:0.336px;">Send Statements</span>
<span class="t" id="t25" style="left:1565.61px;top:142px;font-size:18px;color:#fff;transform:scaleX(0.8925);">Send</span>
<span class="t" id="t26" style="left:1637.88px;top:142px;font-size:18px;color:#2c3a4b;transform:scaleX(0.9185);">Cancel</span>
<span class="t" id="t27" style="left:1075.46px;top:190px;font-size:15px;color:#191919;transform:scaleX(1.0372);letter-spacing:0.500px;">Configure the defaults under</span>
<span class="t" id="t28" style="left:1288.98px;top:190px;font-size:15px;color:#2d8fd5;transform:scaleX(1.0204);letter-spacing:0.500px;">'Settings &gt; Billing Settings &gt; Patient Billing Settings'</span>
<span class="t" id="t29" style="left:322.75px;top:239px;font-size:15px;color:#191919;font-weight:700;-webkit-text-stroke-width:0;letter-spacing:0.269px;">Send through Selected Modes</span>
<span class="t" id="t30" style="left:816.25px;top:239px;font-size:15px;color:#191919;font-weight:700;-webkit-text-stroke-width:0;letter-spacing:0.402px;">Based on Preferred Order</span>
<span class="t" id="t31" style="left:842.07px;top:273px;font-size:15px;color:#191919;transform:scaleX(0.9348);">Cell Number (Text Message)</span>
<span class="t" id="t32" style="left:842.07px;top:303px;font-size:15px;color:#191919;transform:scaleX(0.9333);">PHR</span>
<span class="t" id="t33" style="left:842.06px;top:333px;font-size:15px;color:#191919;transform:scaleX(0.9375);">Email</span>
<span class="t" id="t34" style="left:1164.99px;top:270px;font-size:13px;color:#191919;transform:scaleX(1.0134);letter-spacing:0.500px;">Send through only the first available mode</span>
<span class="t" id="t35" style="left:1164.98px;top:300px;font-size:13px;color:#191919;transform:scaleX(1.0161);letter-spacing:0.500px;">Send through the first two available modes</span>
<span class="t" id="t36" style="left:308.49px;top:392px;font-size:15px;color:#191919;transform:scaleX(1.0147);letter-spacing:0.500px;">Exclude Invoices Sent for Collection</span>
<span class="t" id="t37" style="left:308.00px;top:442px;font-size:15px;color:#191919;letter-spacing:0.500px;">Send Payment Link</span>
<span class="t" id="t38" style="left:474.45px;top:442px;font-size:15px;color:#191919;transform:scaleX(1.0513);letter-spacing:0.500px;">Beneficiary</span>
<span class="t" id="t39" style="left:578.00px;top:443px;font-size:15px;color:#191919;letter-spacing:0.389px;">--Select--</span>
<span class="t" id="t40" style="left:274.50px;top:493px;font-size:15px;color:#191919;font-weight:700;-webkit-text-stroke-width:0;letter-spacing:0.389px;">Selected Statements</span>
<span class="t" id="t41" style="left:441.30px;top:494px;font-size:14px;color:#fff;">5</span>
<span class="t" id="t42" style="left:330.73px;top:544px;font-size:15px;color:#191919;font-weight:700;-webkit-text-stroke-width:0;transform:scaleX(1.0228);letter-spacing:0.500px;">Patient Name</span>
<span class="t" id="t43" style="left:557.00px;top:544px;font-size:15px;color:#191919;font-weight:700;-webkit-text-stroke-width:0;"># of</span>
<span class="t" id="t44" style="left:556.00px;top:564px;font-size:15px;color:#191919;font-weight:700;-webkit-text-stroke-width:0;letter-spacing:0.286px;">Invoices</span>
<span class="t" id="t45" style="left:854.50px;top:541px;font-size:15px;color:#191919;font-weight:700;-webkit-text-stroke-width:0;transform:scaleX(1.0041);letter-spacing:0.500px;">Available Modes</span>
<span class="t" id="t46" style="left:1275.00px;top:544px;font-size:15px;color:#191919;font-weight:700;-webkit-text-stroke-width:0;letter-spacing:0.417px;">Invoice</span>
<span class="t" id="t47" style="left:1268.73px;top:564px;font-size:15px;color:#191919;font-weight:700;-webkit-text-stroke-width:0;transform:scaleX(1.0217);letter-spacing:0.500px;">Amount</span>
<span class="t" id="t48" style="left:1381.25px;top:544px;font-size:15px;color:#191919;font-weight:700;-webkit-text-stroke-width:0;letter-spacing:0.406px;">Payment Requested</span>
<span class="t" id="t49" style="left:1552.47px;top:544px;font-size:15px;color:#191919;font-weight:700;-webkit-text-stroke-width:0;transform:scaleX(1.0322);letter-spacing:0.500px;">Attachment</span>
<span class="t" id="t50" style="left:331.75px;top:606px;font-size:15px;color:#191919;transform:scaleX(1.0581);letter-spacing:0.500px;">Amy Cripto</span>
<span class="t" id="t51" style="left:556.80px;top:606px;font-size:15px;color:#191919;">1</span>
<span class="t" id="t52" style="left:664.71px;top:604px;font-size:15px;color:#191919;transform:scaleX(1.0403);letter-spacing:0.500px;">PHR</span>
<span class="t" id="t53" style="left:756.98px;top:604px;font-size:15px;color:#191919;transform:scaleX(1.0188);letter-spacing:0.500px;">amy.cripto@email.com</span>
<span class="t" id="t54" style="left:1033.92px;top:604px;font-size:15px;color:#191919;transform:scaleX(1.0845);letter-spacing:0.500px;">+132456867945</span>
<span class="t" id="t55" style="left:1286.93px;top:606px;font-size:15px;color:#191919;transform:scaleX(1.0658);letter-spacing:0.500px;">10.00</span>
<span class="t" id="t56" style="left:1488.18px;top:606px;font-size:15px;color:#191919;transform:scaleX(1.0658);letter-spacing:0.500px;">10.00</span>
<span class="t" id="t57" style="left:1553.00px;top:606px;font-size:15px;color:#2d8fd5;transform:scaleX(1.0970);letter-spacing:0.500px;">View</span>
<span class="t" id="t58" style="left:330.72px;top:646px;font-size:15px;color:#191919;transform:scaleX(1.0296);letter-spacing:0.500px;">Bruce Wayne</span>
<span class="t" id="t59" style="left:556.80px;top:646px;font-size:15px;color:#191919;">1</span>
<span class="t" id="t60" style="left:664.65px;top:645px;font-size:15px;color:#191919;transform:scaleX(1.1000);letter-spacing:1.545px;">--</span>
<span class="t" id="t61" style="left:758.00px;top:645px;font-size:15px;color:#191919;transform:scaleX(1.0244);letter-spacing:0.500px;">testemail@zohotest.com</span>
<span class="t" id="t62" style="left:1033.90px;top:645px;font-size:15px;color:#191919;transform:scaleX(1.1000);letter-spacing:1.364px;">--</span>
<span class="t" id="t63" style="left:1267.94px;top:646px;font-size:15px;color:#191919;transform:scaleX(1.0625);letter-spacing:0.500px;">1071.03</span>
<span class="t" id="t64" style="left:1469.44px;top:646px;font-size:15px;color:#191919;transform:scaleX(1.0580);letter-spacing:0.500px;">1071.03</span>
<span class="t" id="t65" style="left:1553.00px;top:646px;font-size:15px;color:#2d8fd5;transform:scaleX(1.0970);letter-spacing:0.500px;">View</span>
<span class="t" id="t66" style="left:330.75px;top:687px;font-size:15px;color:#191919;letter-spacing:0.286px;">Paul Sew</span>
<span class="t" id="t67" style="left:556.80px;top:687px;font-size:15px;color:#191919;">2</span>
<span class="t" id="t68" style="left:664.65px;top:685px;font-size:15px;color:#191919;transform:scaleX(1.1000);letter-spacing:1.545px;">--</span>
<span class="t" id="t69" style="left:758.00px;top:685px;font-size:15px;color:#191919;letter-spacing:0.443px;">saurabh.ss@zohocorp.com</span>
<span class="t" id="t70" style="left:1033.91px;top:685px;font-size:15px;color:#191919;transform:scaleX(1.0921);letter-spacing:0.500px;">+1123-121-2321</span>
<span class="t" id="t71" style="left:1258.67px;top:687px;font-size:15px;color:#191919;transform:scaleX(1.0827);letter-spacing:0.500px;">11400.00</span>
<span class="t" id="t72" style="left:1459.43px;top:687px;font-size:15px;color:#191919;transform:scaleX(1.0736);letter-spacing:0.500px;">10516.67</span>
<span class="t" id="t73" style="left:1553.00px;top:687px;font-size:15px;color:#2d8fd5;transform:scaleX(1.0970);letter-spacing:0.500px;">View</span>
<span class="t" id="t74" style="left:330.67px;top:727px;font-size:15px;color:#191919;transform:scaleX(1.0848);letter-spacing:0.500px;">Mary Brown</span>
<span class="t" id="t75" style="left:556.80px;top:727px;font-size:15px;color:#191919;">1</span>
<span class="t" id="t76" style="left:664.65px;top:725px;font-size:15px;color:#191919;transform:scaleX(1.1000);letter-spacing:1.545px;">--</span>
<span class="t" id="t77" style="left:758.00px;top:725px;font-size:15px;color:#191919;transform:scaleX(1.0088);letter-spacing:0.500px;">test@gmail.com</span>
<span class="t" id="t78" style="left:1033.92px;top:725px;font-size:15px;color:#191919;transform:scaleX(1.0848);letter-spacing:0.500px;">+1987-654-3210</span>
<span class="t" id="t79" style="left:1276.91px;top:727px;font-size:15px;color:#191919;transform:scaleX(1.0860);letter-spacing:0.500px;">100.00</span>
<span class="t" id="t80" style="left:1488.50px;top:727px;font-size:15px;color:#191919;transform:scaleX(1.0577);letter-spacing:0.500px;">42.23</span>
<span class="t" id="t81" style="left:1553.00px;top:727px;font-size:15px;color:#2d8fd5;transform:scaleX(1.0970);letter-spacing:0.500px;">View</span>
<span class="t" id="t82" style="left:330.71px;top:768px;font-size:15px;color:#191919;transform:scaleX(1.0437);letter-spacing:0.500px;">Downey Taylor</span>
<span class="t" id="t83" style="left:556.80px;top:768px;font-size:15px;color:#191919;">1</span>
<span class="t" id="t84" style="left:664.65px;top:765px;font-size:15px;color:#191919;transform:scaleX(1.1000);letter-spacing:1.545px;">--</span>
<span class="t" id="t85" style="left:757.00px;top:765px;font-size:15px;color:#191919;letter-spacing:0.391px;">aakash.shelake@gmail.com</span>
<span class="t" id="t86" style="left:1033.92px;top:765px;font-size:15px;color:#191919;transform:scaleX(1.0848);letter-spacing:0.500px;">+1888-834-9318</span>
<span class="t" id="t87" style="left:1276.91px;top:768px;font-size:15px;color:#191919;transform:scaleX(1.0860);letter-spacing:0.500px;">360.00</span>
<span class="t" id="t88" style="left:1477.91px;top:768px;font-size:15px;color:#191919;transform:scaleX(1.0914);letter-spacing:0.500px;">360.00</span>
<span class="t" id="t89" style="left:1553.00px;top:768px;font-size:15px;color:#2d8fd5;transform:scaleX(1.0970);letter-spacing:0.500px;">View</span>
<span class="t" id="t90" style="left:344.55px;top:815px;font-size:15px;color:#17a1a8;font-weight:700;-webkit-text-stroke-width:0;transform:scaleX(1.0484);letter-spacing:0.500px;">PHR</span>
<span class="t" id="t91" style="left:475.97px;top:815px;font-size:15px;color:#9a9a9a;transform:scaleX(1.0329);letter-spacing:0.500px;">Email</span>
<span class="t" id="t92" style="left:583.00px;top:815px;font-size:15px;color:#9a9a9a;letter-spacing:0.500px;">Text Message</span>
<span class="t" id="t93" style="left:292.17px;top:881px;font-size:15px;color:#191919;transform:scaleX(1.0797);letter-spacing:0.500px;">From</span>
<span class="t" id="t94" style="left:339.00px;top:881px;font-size:14px;color:#e8912d;">*</span>
<span class="t" id="t95" style="left:437.00px;top:882px;font-size:15px;color:#191919;letter-spacing:0.304px;">Dr. David Smith</span>
<span class="t" id="t96" style="left:978.00px;top:881px;font-size:15px;color:#191919;transform:scaleX(1.0174);letter-spacing:0.500px;">Templates</span>
<span class="t" id="t97" style="left:1059.00px;top:881px;font-size:14px;color:#e8912d;">*</span>
<span class="t" id="t98" style="left:1121.50px;top:882px;font-size:15px;color:#191919;letter-spacing:0.140px;">Send Patient Statement PHR Template</span>
<span class="t" id="t99" style="left:292.22px;top:925px;font-size:15px;color:#191919;transform:scaleX(1.0337);letter-spacing:0.500px;">Subject</span>
<span class="t" id="t100" style="left:432.75px;top:926px;font-size:15px;color:#191919;letter-spacing:0.292px;">Statement from ${Practice.Name}</span>
<span class="t" id="t101" style="left:32.91px;top:1025px;font-size:11.5px;color:#8a8a8a;transform:scaleX(0.8448);">Chats</span>
<span class="t" id="t102" style="left:125.15px;top:1025px;font-size:11.5px;color:#8a8a8a;transform:scaleX(0.8511);">Channels</span>
<span class="t" id="t103" style="left:226.11px;top:1025px;font-size:11.5px;color:#8a8a8a;transform:scaleX(0.8864);">Contacts</span>
<span class="t" id="t104" style="left:304.50px;top:1013px;font-size:13px;color:#a9adad;letter-spacing:0.477px;">Here is your Smart Chat (Ctrl+Space)</span>
</div>
</body></html>
